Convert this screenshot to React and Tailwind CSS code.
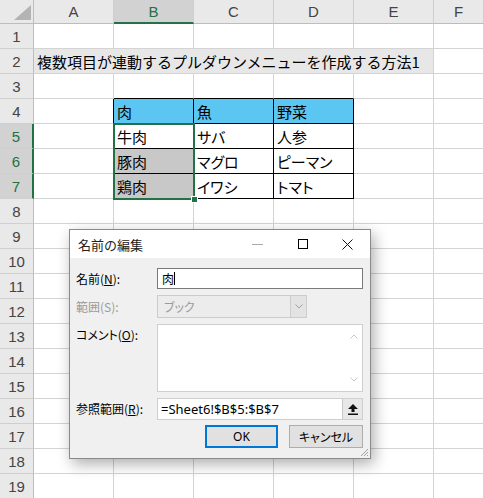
import React from "react";

const COLS = [
  { key: "A", w: "w-[80px]" },
  { key: "B", w: "w-[80px]" },
  { key: "C", w: "w-[80px]" },
  { key: "D", w: "w-[80px]" },
  { key: "E", w: "w-[80px]" },
  { key: "F", w: "w-[50px]" },
];

const DATA = {
  B4: "肉", C4: "魚", D4: "野菜",
  B5: "牛肉", C5: "サバ", D5: "人参",
  B6: "豚肉", C6: "マグロ", D6: "ピーマン",
  B7: "鶏肉", C7: "イワシ", D7: "トマト",
};

const jp = "font-['Noto_Sans_CJK_JP',sans-serif]";
const ui = "font-['Noto_Sans','Noto_Sans_CJK_JP',sans-serif]";

function inTable(r, c) {
  return r >= 4 && r <= 7 && ["B", "C", "D"].includes(c);
}

function Cell({ r, c, w }) {
  const id = c + r;
  const right =
    inTable(r, c) || (c === "A" && r >= 4 && r <= 7) ? "border-r-black" : "border-r-[#d4d4d4]";
  const bottom =
    inTable(r, c) || (r === 3 && ["B", "C", "D"].includes(c)) ? "border-b-black" : "border-b-[#d4d4d4]";
  let bg = "bg-white";
  if (r === 4 && inTable(r, c)) bg = "bg-[#5bc6f1]";
  if (id === "B6" || id === "B7") bg = "bg-[#c8c8c8]";
  return (
    <div className={`${w} h-[25px] shrink-0 border-r border-b ${right} ${bottom} ${bg} flex items-center pl-[3px] text-[15px] text-black ${jp} [font-feature-settings:'palt'] leading-none`}>
      {DATA[id] || ""}
    </div>
  );
}

function RowHead({ n }) {
  const sel = n >= 5 && n <= 7;
  return (
    <div className={`w-[34px] h-[25px] shrink-0 border-b border-b-[#cfcfcf] flex items-center justify-center text-[15px] leading-none font-['Liberation_Sans',sans-serif] ${sel ? "bg-[#d2d2d2] text-[#217346] border-r-2 border-r-[#217346]" : "bg-[#e9e9e9] text-[#444] border-r border-r-[#bdbdbd]"}`}>
      {n}
    </div>
  );
}

function Sheet() {
  const rows = Array.from({ length: 19 }, (_, i) => i + 1);
  return (
    <div className="flex flex-col">
      <div className="flex h-[24px]">
        <div className="w-[34px] h-[24px] shrink-0 bg-[#e9e9e9] border-r border-b border-[#bdbdbd] flex items-end justify-end pr-[2px] pb-[3px]">
          <svg width="17" height="15" viewBox="0 0 17 15">
            <polygon points="17,0 17,15 0,15" fill="#b4b4b4" />
          </svg>
        </div>
        {COLS.map((c) => (
          <div
            key={c.key}
            className={`${c.w} h-[24px] shrink-0 flex items-center justify-center text-[15px] leading-none font-['Liberation_Sans',sans-serif] border-r border-r-[#cfcfcf] ${c.key === "B" ? "bg-[#d2d2d2] text-[#217346] border-b-2 border-b-[#217346]" : "bg-[#e9e9e9] text-[#444] border-b border-b-[#bdbdbd]"}`}
          >
            {c.key}
          </div>
        ))}
      </div>
      {rows.map((r) =>
        r === 2 ? (
          <div key={r} className="flex">
            <RowHead n={r} />
            <div className={`w-[400px] h-[25px] shrink-0 border-r border-b border-[#d4d4d4] bg-[#e7e7e7] flex items-center pl-[3px] text-[15px] text-black ${jp} whitespace-nowrap leading-none`}>
              複数項目が連動するプルダウンメニューを作成する方法1
            </div>
            <div className="w-[50px] h-[25px] shrink-0 border-r border-b border-[#d4d4d4] bg-white" />
          </div>
        ) : (
          <div key={r} className="flex">
            <RowHead n={r} />
            {COLS.map((c) => (
              <Cell key={c.key} r={r} c={c.key} w={c.w} />
            ))}
          </div>
        )
      )}
    </div>
  );
}

function Label({ children, disabled }) {
  return (
    <div className={`w-[81px] shrink-0 text-[12px] ${jp} [font-feature-settings:'palt'] leading-none ${disabled ? "text-[#9a9a9a]" : "text-black"}`}>
      {children}
    </div>
  );
}

function Dialog() {
  return (
    <div className="absolute left-[69px] top-[229px] w-[302px] h-[230px] border border-[#8a8a8a] bg-[#f0f0f0] shadow-[3px_5px_14px_rgba(0,0,0,0.32)] flex flex-col">
      <div className="h-[28px] bg-white flex items-center pl-[8px]">
        <span className={`text-[13px] text-[#222] ${jp} leading-none`}>名前の編集</span>
        <div className="ml-auto flex items-center h-full">
          <div className="w-[45px] flex justify-center">
            <div className="w-[11px] h-px bg-[#aaa]" />
          </div>
          <div className="w-[45px] flex justify-center">
            <div className="w-[10px] h-[10px] border border-black" />
          </div>
          <div className="w-[45px] flex justify-center">
            <svg width="11" height="11" viewBox="0 0 11 11">
              <path d="M0.5 0.5 L10.5 10.5 M10.5 0.5 L0.5 10.5" stroke="#111" strokeWidth="1" />
            </svg>
          </div>
        </div>
      </div>

      <div className="flex flex-col pl-[6px] pr-[7px] pt-[10px]">
        <div className="flex items-center">
          <Label>名前(<span className="underline">N</span>):</Label>
          <div className={`flex-1 h-[21px] bg-white border border-[#7a7a7a] flex items-center pl-[4px] text-[12px] ${jp}`}>
            肉<span className="w-px h-[13px] bg-black" />
          </div>
        </div>

        <div className="flex items-center mt-[6px]">
          <Label disabled>範囲(S):</Label>
          <div className="w-[150px] h-[23px] bg-[#ececec] border border-[#cccccc] flex items-center">
            <span className={`flex-1 pl-[6px] text-[12px] text-[#9a9a9a] ${jp} [font-feature-settings:'palt'] leading-none`}>ブック</span>
            <div className="w-[16px] h-full border-l border-[#cccccc] bg-[#e3e3e3] flex items-center justify-center">
              <svg width="8" height="5" viewBox="0 0 8 5">
                <path d="M0.5 0.5 L4 4 L7.5 0.5" stroke="#a0a0a0" fill="none" />
              </svg>
            </div>
          </div>
        </div>

        <div className="flex items-start mt-[6px]">
          <div className="pt-[5px]">
            <Label>コメント(<span className="underline">O</span>):</Label>
          </div>
          <div className="flex-1 h-[68px] bg-white border border-[#cfcfcf] flex justify-end">
            <div className="w-[16px] flex flex-col justify-between items-center py-[9px]">
              <svg width="8" height="5" viewBox="0 0 8 5">
                <path d="M0.5 4.5 L4 1 L7.5 4.5" stroke="#c8c8c8" fill="none" />
              </svg>
              <svg width="8" height="5" viewBox="0 0 8 5">
                <path d="M0.5 0.5 L4 4 L7.5 0.5" stroke="#c8c8c8" fill="none" />
              </svg>
            </div>
          </div>
        </div>

        <div className="flex items-center mt-[6px]">
          <Label>参照範囲(<span className="underline">R</span>):</Label>
          <div className="flex-1 h-[22px] bg-white border border-[#cfcfcf] flex items-center">
            <span className={`flex-1 pl-[3px] text-[13px] text-black ${ui} leading-none`}>=Sheet6!$B$5:$B$7</span>
            <div className="w-[20px] h-[20px] bg-[#e8e8e8] border-l border-[#c8c8c8] flex items-center justify-center">
              <svg width="10" height="11" viewBox="0 0 10 11">
                <polygon points="5,0 10,5 6.5,5 6.5,8 3.5,8 3.5,5 0,5" fill="#111" />
                <rect x="0" y="9.5" width="10" height="1.5" fill="#111" />
              </svg>
            </div>
          </div>
        </div>

        <div className="flex justify-end gap-[11px] mt-[5px]">
          <div className={`w-[73px] h-[23px] border-2 border-[#0078d7] bg-[#e1e1e1] flex items-center justify-center text-[12px] text-black ${ui}`}>
            OK
          </div>
          <div className={`w-[74px] h-[23px] border border-[#adadad] bg-[#e1e1e1] flex items-center justify-center text-[12px] text-black ${jp} [font-feature-settings:'palt']`}>
            キャンセル
          </div>
        </div>
      </div>
      <svg className="absolute right-[1px] bottom-[1px]" width="10" height="10" viewBox="0 0 10 10">
        <path d="M9 2 L2 9 M9 5 L5 9 M9 8 L8 9" stroke="#a0a0a0" strokeWidth="1" />
      </svg>
    </div>
  );
}

export default function App() {
  return (
    <div className="relative w-[484px] h-[498px] overflow-hidden bg-white">
      <Sheet />
      <div className="absolute left-[113px] top-[123px] w-[82px] h-[77px] border-2 border-[#217346]" />
      <div className="absolute left-[191px] top-[196px] w-[7px] h-[7px] bg-[#217346] border border-white" />
      <Dialog />
    </div>
  );
}
